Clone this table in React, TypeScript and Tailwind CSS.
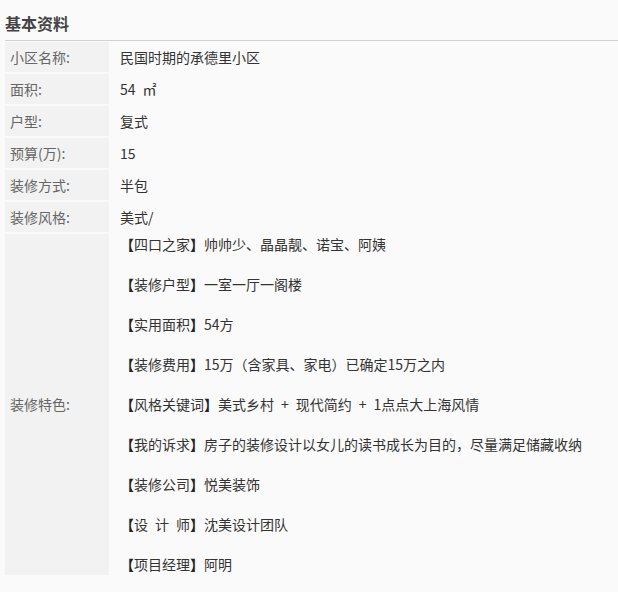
const rows: [string, string][] = [
  ['小区名称:', '民国时期的承德里小区'],
  ['面积:', '54\u2002㎡'],
  ['户型:', '复式'],
  ['预算(万):', '15'],
  ['装修方式:', '半包'],
  ['装修风格:', '美式/'],
]

// en spaces keep the half-width gaps of the original page font
const features: [string, string][] = [
  ['【四口之家】', '帅帅少、晶晶靓、诺宝、阿姨'],
  ['【装修户型】', '一室一厅一阁楼'],
  ['【实用面积】', '54方'],
  ['【装修费用】', '15万（含家具、家电）已确定15万之内'],
  ['【风格关键词】', '美式乡村\u2002+\u2002现代简约\u2002+\u20021点点大上海风情'],
  ['【我的诉求】', '房子的装修设计以女儿的读书成长为目的，尽量满足储藏收纳'],
  ['【装修公司】', '悦美装饰'],
  ['【设\u2002计\u2002师】', '沈美设计团队'],
  ['【项目经理】', '阿明'],
]

export default function App() {
  return (
    <div
      className="w-[618px] h-[592px] overflow-hidden bg-[#fafafa] pl-[5px] text-[14px] text-[#333]"
      style={{ fontFamily: '"Noto Sans CJK SC", "Noto Sans", sans-serif' }}
    >
      <h2 className="pt-[11px] pb-[5px] leading-[24px] text-[16px] font-bold text-[#444] border-b border-[#d2d2d2]">
        基本资料
      </h2>
      <div className="mt-px grid grid-cols-[104px_1fr] gap-[2px]">
        {rows.map(([label, value]) => (
          <div key={label} className="contents">
            <div className="h-[30px] flex items-center pl-[5px] bg-[#f2f2f2] text-[#666]">{label}</div>
            <div className="h-[30px] flex items-center pl-[9px] whitespace-pre">{value}</div>
          </div>
        ))}
        <div className="flex items-center pl-[5px] bg-[#f2f2f2] text-[#666]">装修特色:</div>
        <div className="flex flex-col gap-[20px] pl-[9px] pb-px">
          {features.map(([k, v]) => (
            <p key={k} className="leading-[20px] whitespace-pre">
              <span className="font-bold text-[#222]">{k.slice(0, 1)}</span>
              {k.slice(1, -1)}
              <span className="font-bold text-[#222]">{k.slice(-1)}</span>
              {v}
            </p>
          ))}
        </div>
      </div>
    </div>
  )
}
